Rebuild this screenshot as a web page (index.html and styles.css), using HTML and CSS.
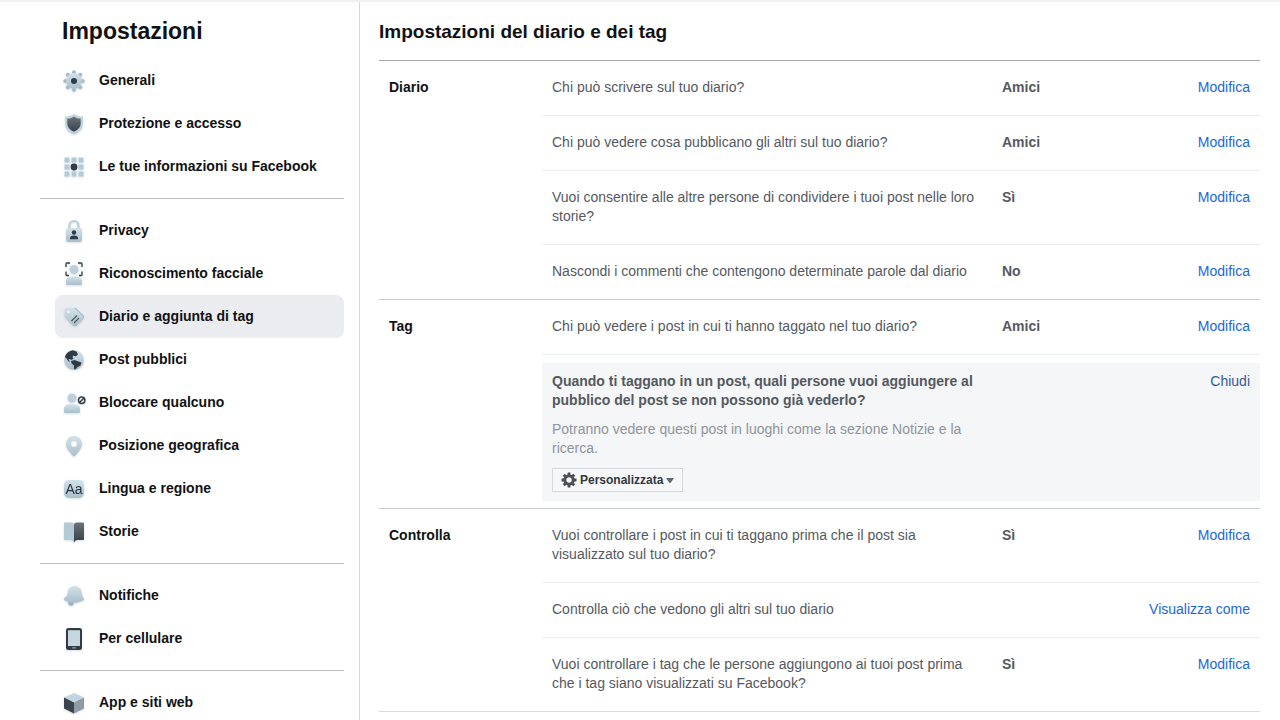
FILE: index.html
```html
<!DOCTYPE html>
<html lang="it">
<head>
  <meta charset="UTF-8" />
  <meta name="viewport" content="width=device-width, initial-scale=1.0" />
  <title>Impostazioni del diario e dei tag</title>
  <link rel="stylesheet" href="styles.css">
</head>
<body>
<svg class="defs" width="0" height="0" aria-hidden="true">
  <defs>
    <linearGradient id="light" x1="0" y1="0" x2="0" y2="1">
      <stop offset="0" stop-color="#d3e2ea" />
      <stop offset="1" stop-color="#a9bfcb" />
    </linearGradient>
    <linearGradient id="dark" x1="0" y1="0" x2="0" y2="1">
      <stop offset="0" stop-color="#6b7379" />
      <stop offset="1" stop-color="#363f47" />
    </linearGradient>
  </defs>
</svg>

<div class="page">
  <nav class="sidebar">
    <h1>Impostazioni</h1>

    <ul class="nav-group">
      <li><a href="#generali" class="nav-item">
        <svg class="icon" viewBox="0 0 22 22">
          <g fill="#a4bbc9">
            <circle cx="11" cy="2.3" r="2" /><circle cx="17.2" cy="4.8" r="2" />
            <circle cx="19.7" cy="11" r="2" /><circle cx="17.2" cy="17.2" r="2" />
            <circle cx="11" cy="19.7" r="2" /><circle cx="4.8" cy="17.2" r="2" />
            <circle cx="2.3" cy="11" r="2" /><circle cx="4.8" cy="4.8" r="2" />
          </g>
          <circle cx="11" cy="11" r="7.9" fill="url(#light)" />
          <circle cx="11" cy="11" r="3" fill="#303c45" />
        </svg>
        Generali</a></li>
      <li><a href="#protezione" class="nav-item">
        <svg class="icon" viewBox="0 0 22 22">
          <path d="M11 1C13.5 3 16.5 3.6 20 3.6V10C20 15.5 16.5 19.5 11 21.5C5.5 19.5 2 15.5 2 10V3.6C5.5 3.6 8.5 3 11 1Z" fill="#bfd3de" />
          <path d="M11 3.6C13 5.2 15 5.7 17.7 5.7V10.5C17.7 14 15 17 11 18.8C7 17 4.3 14 4.3 10.5V5.7C7 5.7 9 5.2 11 3.6Z" fill="url(#dark)" />
        </svg>
        Protezione e accesso</a></li>
      <li><a href="#informazioni" class="nav-item">
        <svg class="icon" viewBox="0 0 22 22">
          <path d="M1.5 1.5h5v5h-5zM8.5 1.5h5v5h-5zM15.5 1.5h5v5h-5zM1.5 8.5h5v5h-5zM8.5 8.5h5v5h-5zM15.5 8.5h5v5h-5zM1.5 15.5h5v5h-5zM8.5 15.5h5v5h-5zM15.5 15.5h5v5h-5z" fill="#b5cad6" />
          <circle cx="11" cy="11" r="3.4" fill="#303c45" />
        </svg>
        Le tue informazioni su Facebook</a></li>
    </ul>

    <ul class="nav-group">
      <li><a href="#privacy" class="nav-item">
        <svg class="icon" viewBox="0 0 22 22">
          <path d="M6.5 10V5.5a4.5 4.5 0 0 1 9 0V10" fill="none" stroke="#bccfda" stroke-width="2.2" />
          <rect x="3" y="8" width="16" height="14" rx="2.5" fill="url(#light)" />
          <circle cx="11" cy="12.5" r="2.2" fill="#303c45" />
          <path d="M7 19.3v-1.3c0-1.6 1.5-2.5 4-2.5s4 .9 4 2.5v1.3z" fill="#303c45" />
        </svg>
        Privacy</a></li>
      <li><a href="#riconoscimento" class="nav-item">
        <svg class="icon" viewBox="0 0 22 22">
          <circle cx="11" cy="6.5" r="4.5" fill="#bccfda" />
          <path d="M3 21v-3c0-3 2.5-4.5 8-4.5s8 1.5 8 4.5v3q0 1-1 1H4q-1 0-1-1z" fill="url(#light)" />
          <path d="M3 4V1q0-1 1-1H7M15 0h3q1 0 1 1v3M3 8.5v3q0 1 1 1H6M16 12.5h2q1 0 1-1v-3" fill="none" stroke="#303c45" stroke-width="1.3" />
        </svg>
        Riconoscimento facciale</a></li>
      <li><a href="#diario" class="nav-item active" aria-current="page">
        <svg class="icon" viewBox="0 0 22 22">
          <path d="M6 2H13L20.5 9.5Q22 11 20.5 12.5L13 20.5 5 13z" fill="#a3bbc9" />
          <path d="M1.5 4Q1.5 2 3.5 2H10Q11.5 2 12.5 3L19.5 10Q21 11.5 19.5 13L13 19.5Q11.5 21 10 19.5L2.5 12Q1.5 11 1.5 9.5z" fill="url(#light)" />
          <circle cx="5.5" cy="6" r="1.3" fill="#ecf2f5" />
          <path d="M8.5 15l5.5-5.5M11 17l5-5" stroke="#46535c" stroke-width="1.1" />
        </svg>
        Diario e aggiunta di tag</a></li>
      <li><a href="#post" class="nav-item">
        <svg class="icon" viewBox="0 0 22 22">
          <circle cx="11" cy="11" r="10" fill="url(#light)" />
          <path d="M2 8C3 4 6.5 1.5 10 1.2L13.5 2.5 15 5.5 12.5 7.5 10.5 6.5 9.5 8 10.5 9.5 8.5 11 7 10 5.5 10.5 7 12.5 5.5 12.5 3.5 9.5ZM8 12L11.5 11 15.5 12.5 18.5 13.5 17.5 16.5 14.5 18 12.5 20.5 11 20 11 16.5 8.5 14.5Z" fill="#303c45" />
        </svg>
        Post pubblici</a></li>
      <li><a href="#bloccare" class="nav-item">
        <svg class="icon" viewBox="0 0 22 22">
          <circle cx="9" cy="6" r="4.5" fill="#bccfda" />
          <path d="M1 20v-3c0-3.5 3-4.7 8-4.7s8 1.2 8 4.7v3q0 1-1 1H2q-1 0-1-1z" fill="url(#light)" />
          <circle cx="18.7" cy="8.3" r="3.2" fill="#eef1f3" stroke="#38434b" stroke-width="1.5" />
          <path d="M16.5 10.5l4.4-4.4" stroke="#38434b" stroke-width="1.5" />
        </svg>
        Bloccare qualcuno</a></li>
      <li><a href="#posizione" class="nav-item">
        <svg class="icon" viewBox="0 0 22 22">
          <path d="M11 1a8 8 0 0 1 8 8c0 4.5-4 8.5-7.2 12q-.8.8-1.6 0C7 17.5 3 13.5 3 9a8 8 0 0 1 8-8z" fill="url(#light)" />
          <circle cx="11" cy="9" r="2.8" fill="#fff" />
        </svg>
        Posizione geografica</a></li>
      <li><a href="#lingua" class="nav-item">
        <svg class="icon" viewBox="0 0 22 22">
          <rect x="1" y="2" width="20" height="18" rx="5" fill="url(#light)" />
          <text x="11" y="16" text-anchor="middle" class="icon-text">Aa</text>
        </svg>
        Lingua e regione</a></li>
      <li><a href="#storie" class="nav-item">
        <svg class="icon" viewBox="0 0 22 22">
          <path d="M1 2.5Q1 1.5 2 1.5H8.5Q11 1.5 11 4V21.5Q10 19 8 19H2Q1 19 1 18Z" fill="#b4cbd6" />
          <path d="M11 4Q11 1.5 13.5 1.5H20Q21 1.5 21 2.5V18Q21 19 20 19H14Q12 19 11 21.5Z" fill="url(#dark)" />
        </svg>
        Storie</a></li>
    </ul>

    <ul class="nav-group">
      <li><a href="#notifiche" class="nav-item">
        <svg class="icon" viewBox="0 0 22 22">
          <circle cx="8" cy="18" r="2.8" fill="#9db4c1" />
          <path d="M5 5.5C6 2 10 .2 13.5 1.2C17 2.2 19 5 18.8 8.5Q18.7 11 20.7 12.8Q21.5 14.5 20 15.5Q16 18 10 17.6Q4 17.2 1.3 15.3Q.2 13.8 1.7 12.6Q4.2 11 4.5 8.5Z" fill="url(#light)" />
        </svg>
        Notifiche</a></li>
      <li><a href="#cellulare" class="nav-item">
        <svg class="icon" viewBox="0 0 22 22">
          <rect x="3" y="0" width="16" height="22" rx="2.5" fill="#303b44" />
          <rect x="5" y="2.2" width="12" height="15.8" fill="#c5d6df" />
          <rect x="9" y="19.2" width="4" height="1.2" rx=".6" fill="#95a0a8" />
        </svg>
        Per cellulare</a></li>
    </ul>

    <ul class="nav-group">
      <li><a href="#app" class="nav-item">
        <svg class="icon" viewBox="0 0 22 22">
          <path d="M11 1L21 5.5 11 10.5 1 5.5Z" fill="#c4d5df" />
          <path d="M1 5.5L11 10.5V21.5L1 16.5Z" fill="#3a454d" />
          <path d="M21 5.5L11 10.5V21.5L21 16.5Z" fill="#8e9ba4" />
        </svg>
        App e siti web</a></li>
    </ul>
  </nav>

  <main class="content">
    <h2>Impostazioni del diario e dei tag</h2>

    <section class="section">
      <h3>Diario</h3>
      <ul class="rows">
        <li class="row">
          <span class="question">Chi può scrivere sul tuo diario?</span>
          <span class="value">Amici</span>
          <a href="#modifica">Modifica</a>
        </li>
        <li class="row">
          <span class="question">Chi può vedere cosa pubblicano gli altri sul tuo diario?</span>
          <span class="value">Amici</span>
          <a href="#modifica">Modifica</a>
        </li>
        <li class="row">
          <span class="question">Vuoi consentire alle altre persone di condividere i tuoi post nelle loro storie?</span>
          <span class="value">Sì</span>
          <a href="#modifica">Modifica</a>
        </li>
        <li class="row">
          <span class="question">Nascondi i commenti che contengono determinate parole dal diario</span>
          <span class="value">No</span>
          <a href="#modifica">Modifica</a>
        </li>
      </ul>
    </section>

    <section class="section">
      <h3>Tag</h3>
      <ul class="rows">
        <li class="row">
          <span class="question">Chi può vedere i post in cui ti hanno taggato nel tuo diario?</span>
          <span class="value">Amici</span>
          <a href="#modifica">Modifica</a>
        </li>
        <li class="row open">
          <div class="question">
            <strong>Quando ti taggano in un post, quali persone vuoi aggiungere al pubblico del post se non possono già vederlo?</strong>
            <p>Potranno vedere questi post in luoghi come la sezione Notizie e la ricerca.</p>
            <button type="button" class="audience">
              <svg class="gear" viewBox="0 0 16 16" aria-hidden="true">
                <circle cx="8" cy="8" r="4.2" fill="none" stroke="#4b4f56" stroke-width="3" />
                <path d="M8 .5v3M8 12.5v3M.5 8h3M12.5 8h3M2.7 2.7l2.1 2.1M11.2 11.2l2.1 2.1M2.7 13.3l2.1-2.1M11.2 4.8l2.1-2.1" stroke="#4b4f56" stroke-width="2.8" />
              </svg>
              Personalizzata
              <svg class="caret" viewBox="0 0 8 5" aria-hidden="true"><path d="M0 0h8L4.5 5h-1z" fill="#606770" /></svg>
            </button>
          </div>
          <a href="#chiudi" class="close">Chiudi</a>
        </li>
      </ul>
    </section>

    <section class="section">
      <h3>Controlla</h3>
      <ul class="rows">
        <li class="row">
          <span class="question">Vuoi controllare i post in cui ti taggano prima che il post sia visualizzato sul tuo diario?</span>
          <span class="value">Sì</span>
          <a href="#modifica">Modifica</a>
        </li>
        <li class="row">
          <span class="question">Controlla ciò che vedono gli altri sul tuo diario</span>
          <a href="#visualizza">Visualizza come</a>
        </li>
        <li class="row">
          <span class="question">Vuoi controllare i tag che le persone aggiungono ai tuoi post prima che i tag siano visualizzati su Facebook?</span>
          <span class="value">Sì</span>
          <a href="#modifica">Modifica</a>
        </li>
      </ul>
    </section>
  </main>
</div>
</body>
</html>
```
FILE: styles.css
```css
* { box-sizing: border-box; }
body {
  margin: 0;
  background: #fff;
  color: #111214;
  font-family: "Liberation Sans", Arial, sans-serif;
  font-size: 14px;
  line-height: 19px;
}
h1, h2, h3, p { margin: 0; }
ul {
  margin: 0;
  padding: 0;
  list-style: none;
}
a {
  color: #1b66e0;
  text-decoration: none;
}
.defs { position: absolute; }

.page {
  display: flex;
  min-height: 100vh;
  border-top: 2px solid #f0f0f1;
}

/* sidebar */
.sidebar {
  flex: none;
  width: 360px;
  padding: 14px 15px 0 40px;
  border-right: 1px solid #d5d6d8;
}
.sidebar h1 {
  margin: 0 0 13px 22px;
  font-size: 23px;
  line-height: 30px;
}
.nav-group + .nav-group {
  margin-top: 10px;
  padding-top: 10px;
  border-top: 1px solid #bec0c3;
}
.nav-item {
  display: flex;
  align-items: center;
  gap: 14px;
  height: 43px;
  margin-left: 15px;
  padding: 0 8px;
  border-radius: 8px;
  color: #111214;
  font-weight: bold;
}
.nav-item.active { background: #ebecf0; }
.icon {
  flex: none;
  width: 22px;
  height: 22px;
  overflow: visible;
  filter: drop-shadow(0 1px 1px rgba(60, 90, 110, 0.2));
}
.icon-text {
  font-size: 14px;
  font-weight: normal;
  fill: #27323a;
}

/* settings */
.content {
  flex: 1;
  min-width: 0;
  padding: 18px 20px 0 19px;
}
.content h2 {
  padding-bottom: 16px;
  font-size: 19px;
  line-height: 24px;
}
.section {
  display: flex;
  border-top: 1px solid #c8cacd;
}
h2 + .section { border-color: #a9abae; }
.section:last-child { border-bottom: 1px solid #dadbdd; }
.section h3 {
  flex: none;
  width: 163px;
  padding: 17px 10px;
  font-size: 14px;
}
.rows {
  flex: 1;
  min-width: 0;
}
.row {
  display: grid;
  grid-template-columns: minmax(0, 434px) 1fr auto;
  column-gap: 16px;
  padding: 17px 10px 18px;
  border-bottom: 1px solid #ebedf0;
  color: #55595f;
}
.row:last-child { border-bottom: 0; }
.row a { grid-column: 3; }
.value { font-weight: bold; }

.row.open {
  margin: 8px 0 7px;
  padding: 9px 10px;
  background: #f4f6f8;
}
.open p {
  margin: 10px 0;
  color: #90949c;
}
.open .close { color: #385898; }
.audience {
  display: flex;
  align-items: center;
  gap: 3px;
  height: 24px;
  padding: 0 8px;
  border: 1px solid #d5d8dc;
  background: #f6f7f9;
  color: #33373d;
  font-family: inherit;
  font-size: 12px;
  font-weight: bold;
}
.gear {
  width: 16px;
  height: 16px;
}
.caret {
  width: 8px;
  height: 5px;
}
```
